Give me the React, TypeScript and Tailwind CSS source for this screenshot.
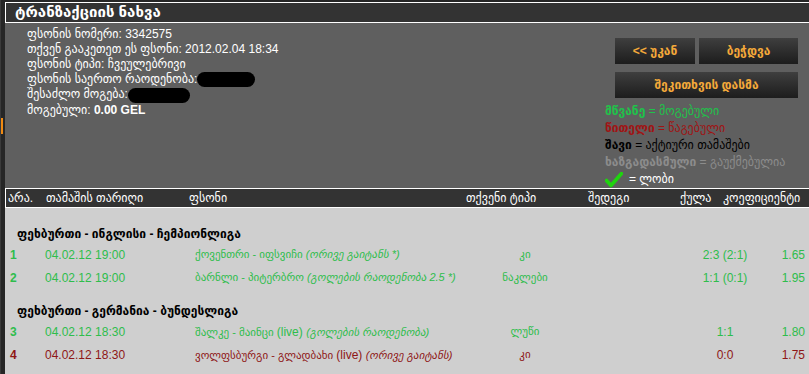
const font = '[font-family:"Liberation_Sans","DejaVu_Sans",sans-serif]';

type Bet = {
  no: number;
  date: string;
  match: string;
  extra?: string;
  note: string;
  type: string;
  score: string;
  odds: string;
  lost?: boolean;
};

const groups: { title: string; bets: Bet[] }[] = [
  {
    title: 'ფეხბურთი - ინგლისი - ჩემპიონლიგა',
    bets: [
      { no: 1, date: '04.02.12 19:00', match: 'ქოვენთრი - იფსვიჩი', note: '(ორივე გაიტანს *)', type: 'კი', score: '2:3 (2:1)', odds: '1.65' },
      { no: 2, date: '04.02.12 19:00', match: 'ბარნლი - პიტერბრო', note: '(გოლების რაოდენობა 2.5 *)', type: 'ნაკლები', score: '1:1 (0:1)', odds: '1.95' },
    ],
  },
  {
    title: 'ფეხბურთი - გერმანია - ბუნდესლიგა',
    bets: [
      { no: 3, date: '04.02.12 18:30', match: 'შალკე - მაინცი', extra: '(live)', note: '(გოლების რაოდენობა)', type: 'ლუწი', score: '1:1', odds: '1.80' },
      { no: 4, date: '04.02.12 18:30', match: 'ვოლფსბურგი - გლადბახი', extra: '(live)', note: '(ორივე გაიტანს)', type: 'კი', score: '0:0', odds: '1.75', lost: true },
    ],
  },
];

function Blot({ w }: { w: string }) {
  return <span className={`inline-block h-[15px] ${w} rounded-full bg-black align-middle`} />;
}

function Check() {
  return (
    <svg width="18" height="16" viewBox="0 0 18 16" className="inline-block">
      <path d="M1.5 8.5 L6 13.5 L16.5 1.5" fill="none" stroke="#1fd40f" strokeWidth="3.6" strokeLinecap="round" strokeLinejoin="round" />
    </svg>
  );
}

function BetRow({ bet }: { bet: Bet }) {
  const color = bet.lost ? 'text-[#8e1616]' : 'text-[#2ebd4c]';
  return (
    <div className={`flex h-[23px] items-center text-[12px] ${color}`}>
      <div className="w-[40px] pl-[5px] font-bold">{bet.no}</div>
      <div className="w-[150px]">{bet.date}</div>
      <div className="w-[280px] whitespace-nowrap text-[11px]">
        {bet.match} {bet.extra && <span className="text-[12px]">{bet.extra} </span>}
        <span className="italic">{bet.note}</span>
      </div>
      <div className="w-[100px] text-center text-[11px]">{bet.type}</div>
      <div className="w-[100px]" />
      <div className="w-[100px] text-center">{bet.score}</div>
      <div className="w-[30px] text-right">{bet.odds}</div>
    </div>
  );
}

export default function App() {
  return (
    <div className={`flex h-[374px] w-[809px] overflow-hidden bg-[#262626] ${font}`}>
      <div className="relative w-[5px] border-l border-[#3a3a3a]">
        <div className="absolute left-0 top-[118px] h-[16px] w-[2px] bg-[#f08a12]" />
      </div>

      <div className="mt-[2px] flex flex-1 flex-col">
        <div className="flex h-[21px] items-center border-y border-l border-white bg-[#333333] pl-[9px] text-[15px] font-bold text-white">
          ტრანზაქციის ნახვა
        </div>

        <div className="flex h-[168px] bg-[#5f5f5f]">
          <div className="flex-1 pl-[22px] pt-[4px] text-[12px] leading-[15px] text-white">
            <div>ფსონის ნომერი: 3342575</div>
            <div>თქვენ გააკეთეთ ეს ფსონი: 2012.02.04 18:34</div>
            <div>ფსონის ტიპი: ჩვეულებრივი</div>
            <div>ფსონის საერთო რაოდენობა:<Blot w="w-[58px]" /></div>
            <div>შესაძლო მოგება:<Blot w="w-[62px]" /></div>
            <div>მოგებული: <span className="font-bold">0.00 GEL</span></div>
          </div>

          <div className="w-[204px] pt-[15px]">
            <div className="flex gap-[4px] pl-[10px]">
              <button className="h-[26px] w-[80px] bg-gradient-to-b from-[#3f3f3f] to-[#1d1d1d] text-[12px] font-bold text-[#f4a93a]">
                &lt;&lt; უკან
              </button>
              <button className="h-[26px] w-[99px] bg-gradient-to-b from-[#3f3f3f] to-[#1d1d1d] text-[12px] font-bold text-[#f4a93a]">
                ბეჭდვა
              </button>
            </div>
            <div className="mt-[8px] pl-[10px]">
              <button className="h-[26px] w-[183px] bg-gradient-to-b from-[#3f3f3f] to-[#1d1d1d] text-[12px] font-bold text-[#f4a93a]">
                შეკითხვის დასმა
              </button>
            </div>
            <div className="mt-[5px] text-[12px] leading-[17px]">
              <div className="text-[#20c24a]"><b>მწვანე</b> = მოგებული</div>
              <div className="text-[#a01414]"><b>წითელი</b> = წაგებული</div>
              <div className="text-black"><b>შავი</b> = აქტიური თამაშები</div>
              <div className="text-[#8c8c8c]"><b>ხაზგადასმული</b> = გაუქმებულია</div>
              <div className="flex items-center gap-[6px] text-white"><Check /> = ლობი</div>
            </div>
          </div>
        </div>

        <div className="flex h-[24px] items-center border-y border-l border-white bg-[#333333] pl-[2px] text-[12px] text-white">
          <div className="w-[38px]">არა.</div>
          <div className="w-[143px]">თამაშის თარიღი</div>
          <div className="w-[277px]">ფსონი</div>
          <div className="w-[122px]">თქვენი ტიპი</div>
          <div className="w-[92px]">შედეგი</div>
          <div className="w-[43px]">ქულა</div>
          <div className="whitespace-nowrap">კოეფიციენტი</div>
        </div>

        <div className="flex-1 bg-[#cfcfcf] pt-[17px]">
          {groups.map((g) => (
            <div key={g.title} className="mb-[13px]">
              <div className="h-[18px] pl-[12px] text-[12px] leading-[18px] font-bold text-black">{g.title}</div>
              {g.bets.map((b) => (
                <BetRow key={b.no} bet={b} />
              ))}
            </div>
          ))}
        </div>
      </div>
    </div>
  );
}
